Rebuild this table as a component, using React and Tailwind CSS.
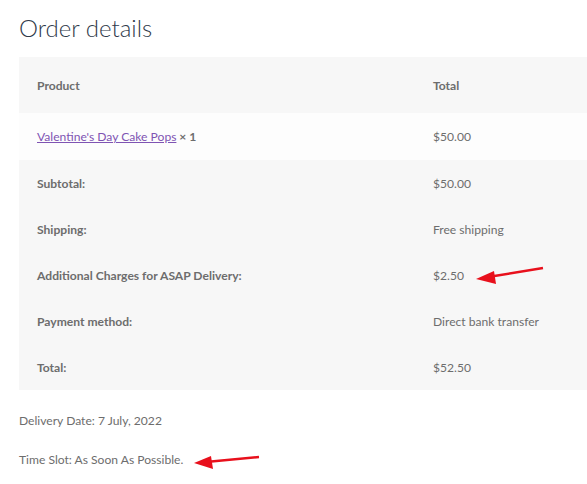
export default function App() {
  const rows = [
    ["Subtotal:", "$50.00"],
    ["Shipping:", "Free shipping"],
    ["Additional Charges for ASAP Delivery:", "$2.50"],
    ["Payment method:", "Direct bank transfer"],
    ["Total:", "$52.50"],
  ];
  return (
    <div className="relative w-[587px] h-[484px] overflow-hidden bg-white text-[#6d6d6d] text-[12.1px]" style={{ fontFamily: '"Source Sans Pro", Lato, "Open Sans", sans-serif' }}>
      <h2 className="pl-[19px] pt-[12px] h-[57px] text-[24px] font-light text-[#2f3a4a] leading-[32px]">Order details</h2>
      <div className="ml-[19px] w-[600px] bg-[#f7f7f7]">
        <div className="flex items-center h-[56px] pt-[3px] font-bold">
          <div className="w-[414px] pl-[18px]">Product</div>
          <div>Total</div>
        </div>
        <div className="flex items-center h-[47px] pt-[2px] bg-[#fdfdfd]">
          <div className="w-[414px] pl-[18px]">
            <span className="text-[#7f54b3] underline">Valentine's Day Cake Pops</span>
            <span className="font-bold"> × 1</span>
          </div>
          <div>$50.00</div>
        </div>
        {rows.map(([a, b]) => (
          <div key={a} className="flex items-center h-[46px] pt-[3px]">
            <div className="w-[414px] pl-[18px] font-bold">{a}</div>
            <div>{b}</div>
          </div>
        ))}
      </div>
      <p className="pl-[19px] mt-[21px] leading-[20px]">Delivery Date: 7 July, 2022</p>
      <p className="pl-[19px] mt-[19px] leading-[20px]">Time Slot: As Soon As Possible.</p>
      <svg className="absolute left-0 top-0" width="587" height="484">
        <line x1="543" y1="268" x2="488" y2="277" stroke="#e8101c" strokeWidth="2.5" />
        <polygon points="476,279 494,271 496,284" fill="#e8101c" />
        <line x1="259" y1="457" x2="206" y2="462" stroke="#e8101c" strokeWidth="2.5" />
        <polygon points="194,463 211,456 213,469" fill="#e8101c" />
      </svg>
    </div>
  );
}
